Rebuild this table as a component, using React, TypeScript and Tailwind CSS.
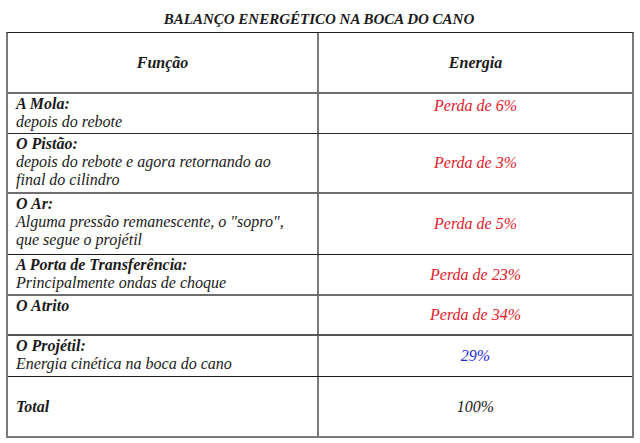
import React from 'react';

const rows = [
  { title: 'A Mola:', desc: 'depois do rebote', value: 'Perda de 6%', color: 'text-[#e3202c]', h: 'h-[40px]', line: 'border-b border-[#2a2a2a]', rightTop: true, leftMid: false },
  { title: 'O Pistão:', desc: 'depois do rebote e agora retornando ao final do cilindro', value: 'Perda de 3%', color: 'text-[#e3202c]', h: 'h-[60px]', line: 'border-b-2 border-[#6e6e6e]', rightTop: false, leftMid: false },
  { title: 'O Ar:', desc: 'Alguma pressão remanescente, o \u0022sopro\u0022, que segue o projétil', value: 'Perda de 5%', color: 'text-[#e3202c]', h: 'h-[61px]', line: 'border-b border-[#1a1a1a]', rightTop: false, leftMid: false },
  { title: 'A Porta de Transferência:', desc: 'Principalmente ondas de choque', value: 'Perda de 23%', color: 'text-[#e3202c]', h: 'h-[41px]', line: 'border-b-2 border-[#6e6e6e]', rightTop: false, leftMid: false },
  { title: 'O Atrito', desc: '', value: 'Perda de 34%', color: 'text-[#e3202c]', h: 'h-[40px]', line: 'border-b-2 border-[#555555]', rightTop: false, leftMid: false },
  { title: 'O Projétil:', desc: 'Energia cinética na boca do cano', value: '29%', color: 'text-[#2a2ad8]', h: 'h-[41px]', line: 'border-b border-[#1a1a1a]', rightTop: false, leftMid: false },
  { title: 'Total', desc: '', value: '100%', color: 'text-[#1a1a1a]', h: 'h-[59px]', line: '', rightTop: false, leftMid: true },
];

const App = () => {
  return (
    <div className="w-[640px] h-[443px] bg-white overflow-hidden font-['Liberation_Serif','Times_New_Roman',serif] italic text-[#1a1a1a]">
      <div className="h-[32px] flex items-end justify-center pb-[4px] pr-[2px]">
        <h1 className="font-['Liberation_Serif','Times_New_Roman',serif] italic text-[15px] leading-[18px] font-bold">BALANÇO ENERGÉTICO NA BOCA DO CANO</h1>
      </div>

      <div className="ml-[6px] w-[628px] border-t border-[#1f1f1f] border-x-2 border-x-[#7a7a7a] border-b-2 border-b-[#7a7a7a]">
        <div className="flex h-[61px] border-b-2 border-[#6e6e6e]">
          <div className="w-[311px] border-r-2 border-[#7a7a7a] flex items-center justify-center">
            <span className="font-['Liberation_Serif','Times_New_Roman',serif] italic text-[16px] font-bold">Função</span>
          </div>
          <div className="flex-1 flex items-center justify-center">
            <span className="font-['Liberation_Serif','Times_New_Roman',serif] italic text-[16px] font-bold">Energia</span>
          </div>
        </div>

        {rows.map((r, i) => (
          <div key={i} className={`flex ${r.h} ${r.line}`}>
            <div className={`w-[311px] border-r-2 border-[#7a7a7a] pl-[8px] pr-[14px] flex flex-col ${r.leftMid ? 'justify-center' : 'pt-[1px]'}`}>
              <span className="font-['Liberation_Serif','Times_New_Roman',serif] italic text-[16px] leading-[18px] font-bold">{r.title}</span>
              {r.desc && <span className="font-['Liberation_Serif','Times_New_Roman',serif] italic text-[16px] leading-[18px]">{r.desc}</span>}
            </div>
            <div className={`flex-1 flex justify-center ${r.rightTop ? 'items-start pt-[3px]' : 'items-center'}`}>
              <span className={`font-['Liberation_Serif','Times_New_Roman',serif] italic text-[16px] leading-[18px] ${r.color}`}>{r.value}</span>
            </div>
          </div>
        ))}
      </div>
    </div>
  );
};

export default App;
